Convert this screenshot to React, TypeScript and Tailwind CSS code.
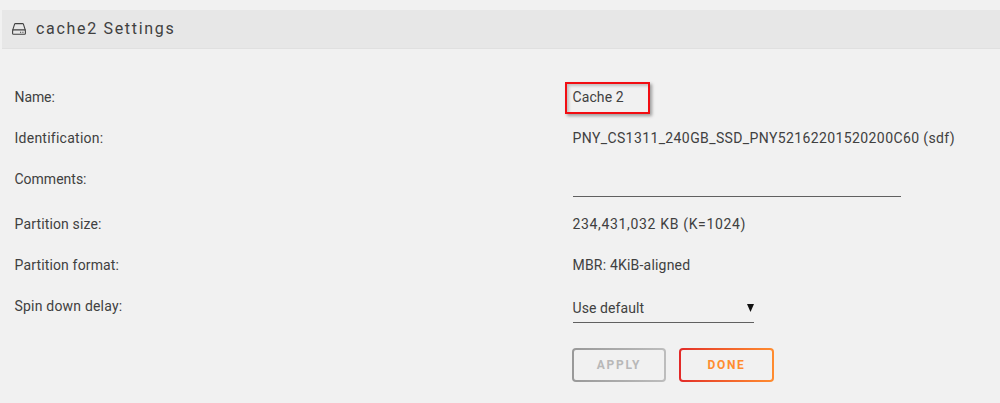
import React, { useState } from 'react';

interface RowProps {
  label: string;
  tracking: string;
  height: string;
  children: React.ReactNode;
}

const DiskIcon = () => (
  <svg className="w-[14px] h-[12px] shrink-0" viewBox="0 0 14 12" fill="none" stroke="#404040" strokeWidth="1.1">
    <path d="M0.7 7.2 L2.6 1.2 Q2.8 0.6 3.4 0.6 H10.6 Q11.2 0.6 11.4 1.2 L13.3 7.2" />
    <rect x="0.6" y="6.9" width="12.8" height="4.4" rx="0.9" />
    <path d="M8 9.2 H9.2 M10.3 9.2 H11.5" />
  </svg>
);

const Row = ({ label, tracking, height, children }: RowProps) => (
  <div className={`flex ${height}`}>
    <div className={`w-[558px] shrink-0 ${tracking}`}>{label}</div>
    <div className="flex-1">{children}</div>
  </div>
);

export default function App() {
  const [comments, setComments] = useState('');

  return (
    <div className="h-[403px] overflow-hidden bg-[#f1f1f1] pt-[10px] font-['Roboto',sans-serif] text-[14px] leading-[20px] text-[#404040]">
      {/* Section title */}
      <div className="ml-[2px] flex h-[39px] items-center border-b border-[#e0e0e0] bg-[#e7e7e7] pl-[10px]">
        <DiskIcon />
        <h1 className="ml-[10px] text-[16px] tracking-[1.68px]">cache2 Settings</h1>
      </div>

      <div className="pl-[14.5px] pt-[38px]">
        <Row label="Name:" tracking="tracking-[-0.1px]" height="h-[41px]">
          <div className="-ml-[8px] -mt-[5px] flex h-[32px] w-[85px] items-center border-2 border-[#f20d12] pl-[6px] pb-[2px] tracking-[0.1px] shadow-[2px_2px_3px_rgba(0,0,0,0.35),inset_2px_2px_3px_rgba(0,0,0,0.2)]">
            Cache 2
          </div>
        </Row>
        <Row label="Identification:" tracking="tracking-[0.25px]" height="h-[41px]">
          <span className="tracking-[0.39px]">PNY_CS1311_240GB_SSD_PNY52162201520200C60 (sdf)</span>
        </Row>
        <Row label="Comments:" tracking="tracking-[0px]" height="h-[45px]">
          <input
            type="text"
            value={comments}
            onChange={(e) => setComments(e.target.value)}
            className="block h-[28px] w-[328px] border-b border-[#606060] bg-transparent outline-none"
          />
        </Row>
        <Row label="Partition size:" tracking="tracking-[0.15px]" height="h-[41px]">
          <span className="tracking-[0.66px]">234,431,032 KB (K=1024)</span>
        </Row>
        <Row label="Partition format:" tracking="tracking-[0.15px]" height="h-[41px]">
          <span className="tracking-[0.2px]">MBR: 4KiB-aligned</span>
        </Row>
        <Row label="Spin down delay:" tracking="tracking-[0.2px]" height="h-[52px]">
          <div className="flex h-[27px] w-[181px] items-center justify-between border-b border-[#606060] pb-[3px]">
            <span className="tracking-[0.1px]">Use default</span>
            <svg className="w-[7px] h-[8px]" viewBox="0 0 7 8">
              <path d="M0 0 H7 L3.5 8 Z" fill="#111111" />
            </svg>
          </div>
        </Row>

        {/* Buttons */}
        <div className="ml-[557.5px] flex gap-[13px] text-[12px] font-bold tracking-[1.7px]">
          <button disabled className="h-[34px] w-[94px] rounded-[4px] bg-linear-to-r from-[#999999] to-[#bdbdbd] p-[2px]">
            <span className="flex h-full items-center justify-center rounded-[2px] bg-[#f1f1f1] text-[#b8b8b8]">APPLY</span>
          </button>
          <button className="h-[34px] w-[95px] rounded-[4px] bg-linear-to-r from-[#e22828] to-[#ff8c2f] p-[2px]">
            <span className="flex h-full items-center justify-center rounded-[2px] bg-[#f1f1f1] text-[#ff8c2f]">DONE</span>
          </button>
        </div>
      </div>
    </div>
  );
}
